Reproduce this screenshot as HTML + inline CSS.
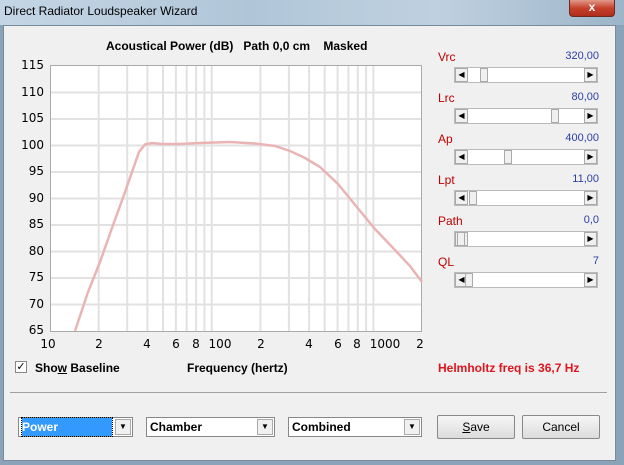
<!DOCTYPE html>
<html><head><meta charset="utf-8"><style>
body{margin:0;width:624px;height:465px;overflow:hidden;font-family:"Liberation Sans",sans-serif;background:#8aa3b8;position:relative}
.a{position:absolute}
.b{font-weight:bold;font-size:12px;color:#000}
.lab{font-size:12px;color:#c00000}
.val{font-size:11px;color:#2a3fa8;text-align:right;width:80px}
.sl{position:absolute;left:454px;width:144px;height:16px;background:#fff;border:1px solid #bbb;box-sizing:border-box}
.ar{position:absolute;top:0;width:13px;height:14px;background:#f0f0f0;border:1px solid #aaa;box-sizing:border-box;font-size:8px;line-height:12px;text-align:center}
.th{position:absolute;top:0;width:8px;height:14px;background:#f0f0f0;border:1px solid #aaa;box-sizing:border-box}
.dd{position:absolute;top:417px;height:20px;background:#fff;border:1px solid #888;box-sizing:border-box;font-size:12px;font-weight:bold;line-height:18px;padding-left:3px}
.dd i{position:absolute;right:1px;top:1px;width:16px;height:16px;background:#f0f0f0;border:1px solid #aaa;box-sizing:border-box;font-style:normal;font-size:8px;text-align:center;line-height:14px;font-weight:normal}
.btn{position:absolute;top:415px;height:24px;width:78px;background:linear-gradient(#f6f6f6,#dcdcdc);border:1px solid #888;border-radius:2px;box-sizing:border-box;font-size:12px;text-align:center;line-height:22px}
.yl{position:absolute;left:16px;width:28px;text-align:right;font-family:"DejaVu Sans",sans-serif;font-size:12px}
.xl{position:absolute;top:337px;width:40px;margin-left:-20px;text-align:center;font-family:"DejaVu Sans",sans-serif;font-size:12px}
</style></head><body>
<div class="a" style="left:0;top:0;width:624px;height:25px;background:linear-gradient(90deg,#c4d6e6,#b0c6d8 40%,#bfd1e1 70%,#9db5c9)"></div>
<div class="a" style="left:4px;top:4px;font-size:12px;color:#000">Direct Radiator Loudspeaker Wizard</div>
<div class="a" style="left:569px;top:0;width:46px;height:17px;background:linear-gradient(#e09a8a,#c6412c 50%,#b02d1a);border:1px solid #6b2a20;border-top:0;border-radius:0 0 4px 4px;box-sizing:border-box;color:#fff;font-weight:bold;text-align:center;font-size:12px;line-height:15px">x</div>
<div class="a" style="left:3px;top:25px;width:613px;height:436px;background:#f0f0f0;border:1px solid #7a8a9a;box-sizing:border-box"></div>
<div class="a b" style="left:106px;top:39px">Acoustical Power (dB)&nbsp;&nbsp; Path 0,0 cm&nbsp;&nbsp;&nbsp; Masked</div>
<div class="yl" style="top:58px">115</div><div class="yl" style="top:85px">110</div><div class="yl" style="top:111px">105</div><div class="yl" style="top:138px">100</div><div class="yl" style="top:164px">95</div><div class="yl" style="top:191px">90</div><div class="yl" style="top:217px">85</div><div class="yl" style="top:244px">80</div><div class="yl" style="top:270px">75</div><div class="yl" style="top:297px">70</div><div class="yl" style="top:323px">65</div>
<svg class="a" style="left:0;top:0" width="624" height="465">
<rect x="50.5" y="65.5" width="371" height="266" fill="#fff" stroke="#aaa"/>
<g stroke="#e2e2e2" stroke-width="2">
<path d="M51 92.5H421M51 119H421M51 145.5H421M51 172H421M51 198.5H421M51 225H421M51 251.5H421M51 278H421M51 304.5H421"/>
<path d="M98.7 66V331M127.2 66V331M147.4 66V331M163 66V331M175.9 66V331M186.7 66V331M196.1 66V331M204.4 66V331M211.7 66V331M260.4 66V331M288.9 66V331M309.1 66V331M324.7 66V331M337.6 66V331M348.4 66V331M357.8 66V331M366.1 66V331M373.4 66V331"/>
</g>
<path d="M75 331 L88 292 L100 262 L112 228 L124 195 L132 172 L139 152 L145 144.5 L152 143 L162 144 L180 144 L200 143 L230 142 L255 143.5 L275 146 L290 151 L305 158 L320 167 L338 184 L356 206 L375 229 L395 250 L410 266 L422 282" fill="none" stroke="#eab4b4" stroke-width="2.5"/>
</svg>
<div class="xl" style="left:48px">10</div><div class="xl" style="left:99px">2</div><div class="xl" style="left:147px">4</div><div class="xl" style="left:176px">6</div><div class="xl" style="left:196px">8</div><div class="xl" style="left:220px">100</div><div class="xl" style="left:261px">2</div><div class="xl" style="left:309px">4</div><div class="xl" style="left:338px">6</div><div class="xl" style="left:357px">8</div><div class="xl" style="left:385px">1000</div><div class="xl" style="left:420px">2</div>
<div class="lab a" style="left:438px;top:50px">Vrc</div><div class="val a" style="left:519px;top:50px">320,00</div>
<div class="lab a" style="left:438px;top:91px">Lrc</div><div class="val a" style="left:519px;top:91px">80,00</div>
<div class="lab a" style="left:438px;top:132px">Ap</div><div class="val a" style="left:519px;top:132px">400,00</div>
<div class="lab a" style="left:438px;top:173px">Lpt</div><div class="val a" style="left:519px;top:173px">11,00</div>
<div class="lab a" style="left:438px;top:214px">Path</div><div class="val a" style="left:519px;top:214px">0,0</div>
<div class="lab a" style="left:438px;top:255px">QL</div><div class="val a" style="left:519px;top:255px">7</div>
<div class="sl" style="top:67px"><div class="ar" style="left:0">◀</div><div class="th" style="left:25px"></div><div class="ar" style="right:0">▶</div></div>
<div class="sl" style="top:108px"><div class="ar" style="left:0">◀</div><div class="th" style="left:96px"></div><div class="ar" style="right:0">▶</div></div>
<div class="sl" style="top:149px"><div class="ar" style="left:0">◀</div><div class="th" style="left:49px"></div><div class="ar" style="right:0">▶</div></div>
<div class="sl" style="top:190px"><div class="ar" style="left:0">◀</div><div class="th" style="left:14px"></div><div class="ar" style="right:0">▶</div></div>
<div class="sl" style="top:231px"><div class="ar" style="left:0">◀</div><div class="th" style="left:2px"></div><div class="ar" style="right:0">▶</div></div>
<div class="sl" style="top:272px"><div class="ar" style="left:0">◀</div><div class="th" style="left:10px"></div><div class="ar" style="right:0">▶</div></div>
<div class="a" style="left:15px;top:361px;width:12px;height:12px;background:#fff;border:1px solid #888;box-sizing:border-box;font-size:11px;line-height:10px;text-align:center">✓</div>
<div class="a b" style="left:35px;top:361px">Sho<u>w</u> Baseline</div>
<div class="a b" style="left:187px;top:361px">Frequency (hertz)</div>
<div class="a b" style="left:438px;top:361px;color:#e0141e">Helmholtz freq is 36,7 Hz</div>
<div class="a" style="left:10px;top:392px;width:597px;height:1px;background:#a0a0a0"></div>
<div class="dd" style="left:18px;width:115px"><span style="background:#3399ff;color:#fff;display:inline-block;width:90px;outline:1px dotted #000">Power</span><i>▼</i></div>
<div class="dd" style="left:146px;width:129px">Chamber<i>▼</i></div>
<div class="dd" style="left:288px;width:134px">Combined<i>▼</i></div>
<div class="btn" style="left:437px"><u>S</u>ave</div>
<div class="btn" style="left:522px">Cancel</div>
</body></html>
